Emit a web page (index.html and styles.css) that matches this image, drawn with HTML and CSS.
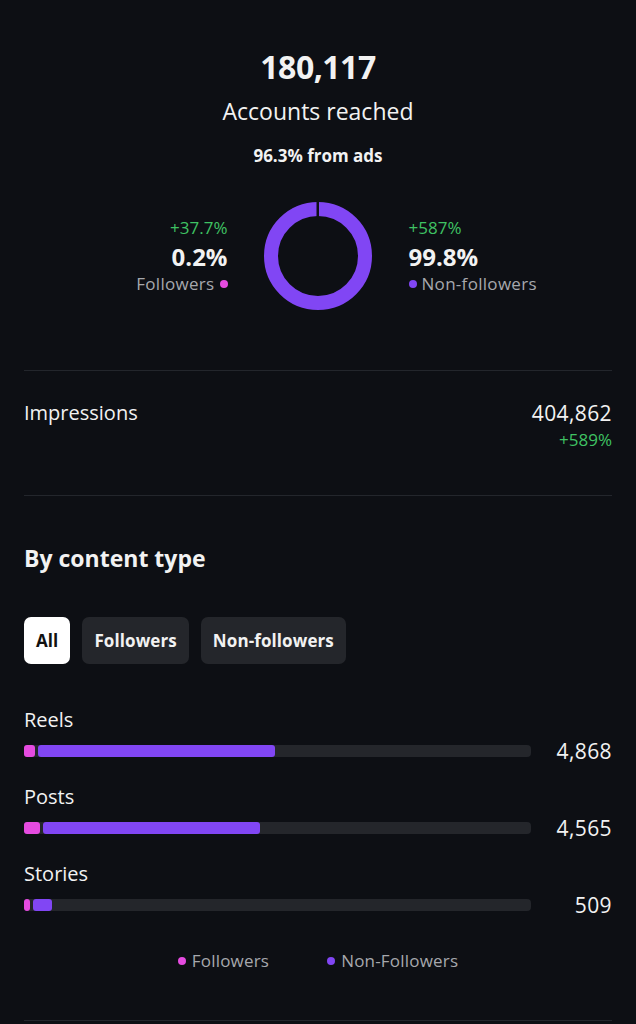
FILE: index.html
```html
<!DOCTYPE html>
<html>
<head>
<meta charset="utf-8">
<link rel="stylesheet" href="styles.css">
</head>
<body>
<main class="page">
  <section class="hero">
    <div class="big">180,117</div>
    <div class="sub">Accounts reached</div>
    <div class="ads">96.3% from ads</div>
    <div class="split">
      <div class="side left">
        <div class="chg">+37.7%</div>
        <div class="pct">0.2%</div>
        <div class="lbl">Followers <span class="dot pink"></span></div>
      </div>
      <svg class="donut" width="110" height="110" viewBox="0 0 110 110">
        <circle cx="55" cy="55" r="47" fill="none" stroke="#8146f4" stroke-width="14"/>
        <rect x="53.5" y="0" width="2.5" height="16" fill="#0d0f14"/>
      </svg>
      <div class="side right">
        <div class="chg">+587%</div>
        <div class="pct">99.8%</div>
        <div class="lbl"><span class="dot purple"></span> Non-followers</div>
      </div>
    </div>
  </section>

  <section class="imp">
    <div class="imp-l">Impressions</div>
    <div class="imp-r">
      <div class="imp-v">404,862</div>
      <div class="imp-c">+589%</div>
    </div>
  </section>

  <section class="ct">
    <h2 class="ct-title">By content type</h2>
    <div class="tabs">
      <span class="tab active">All</span>
      <span class="tab">Followers</span>
      <span class="tab">Non-followers</span>
    </div>
    <div class="rows">
      <div class="row">
        <div class="row-l">Reels</div>
        <div class="row-b">
          <div class="track">
            <span class="seg pink" style="width:11px"></span>
            <span class="seg purple" style="width:237px"></span>
          </div>
          <div class="val">4,868</div>
        </div>
      </div>
      <div class="row">
        <div class="row-l">Posts</div>
        <div class="row-b">
          <div class="track">
            <span class="seg pink" style="width:16px"></span>
            <span class="seg purple" style="width:217px"></span>
          </div>
          <div class="val">4,565</div>
        </div>
      </div>
      <div class="row">
        <div class="row-l">Stories</div>
        <div class="row-b">
          <div class="track">
            <span class="seg pink" style="width:6px"></span>
            <span class="seg purple" style="width:19px"></span>
          </div>
          <div class="val">509</div>
        </div>
      </div>
    </div>
    <div class="legend">
      <span class="li"><span class="dot pink"></span>Followers</span>
      <span class="li"><span class="dot purple"></span>Non-Followers</span>
    </div>
  </section>
</main>
</body>
</html>
```

FILE: styles.css
```css
html, body {
  margin: 0;
  padding: 0;
  background: #0d0f14;
}
body {
  font-family: "Open Sans", "Noto Sans", sans-serif;
  color: #f2f2f2;
  width: 636px;
  height: 1024px;
  overflow: hidden;
}
.page {
  padding: 0 24px;
}
.hero {
  display: flex;
  flex-direction: column;
  align-items: center;
  padding-top: 45px;
  padding-bottom: 59px;
  border-bottom: 1px solid #23262c;
}
.big {
  font-size: 32px;
  font-weight: 700;
  line-height: 44px;
  letter-spacing: -0.5px;
}
.sub {
  font-size: 23px;
  line-height: 30px;
  margin-top: 7px;
}
.ads {
  font-size: 17px;
  font-weight: 700;
  line-height: 22px;
  margin-top: 19px;
}
.split {
  display: flex;
  align-items: center;
  justify-content: center;
  margin-top: 34px;
  gap: 34px;
}
.side {
  display: flex;
  flex-direction: column;
  width: 170px;
}
.side.left { align-items: flex-end; margin-right: 1px; }
.side.right { align-items: flex-start; margin-left: 2px; }
.chg {
  color: #3fc263;
  font-size: 17px;
  line-height: 22px;
}
.pct {
  font-size: 24px;
  font-weight: 700;
  line-height: 30px;
  margin-top: 3px;
}
.lbl {
  color: #a6a8ad;
  font-size: 17px;
  line-height: 24px;
  letter-spacing: 0.3px;
  display: flex;
  align-items: center;
  gap: 5px;
}
.dot {
  display: inline-block;
  width: 8px;
  height: 8px;
  border-radius: 50%;
}
.dot.pink { background: #e54be0; }
.dot.purple { background: #8146f4; }
.donut { display: block; }

.imp {
  display: flex;
  justify-content: space-between;
  align-items: flex-start;
  padding-top: 28px;
  padding-bottom: 44px;
  border-bottom: 1px solid #23262c;
}
.imp-l {
  font-size: 20px;
  line-height: 28px;
}
.imp-r {
  display: flex;
  flex-direction: column;
  align-items: flex-end;
}
.imp-v {
  font-size: 21px;
  line-height: 28px;
  letter-spacing: 0.4px;
}
.imp-c {
  color: #3fc263;
  font-size: 17px;
  line-height: 22px;
  margin-top: 2px;
}

.ct {
  padding-top: 47px;
  border-bottom: 1px solid #23262c;
  padding-bottom: 47px;
}
.ct-title {
  margin: 0;
  font-size: 23px;
  font-weight: 700;
  line-height: 30px;
}
.tabs {
  display: flex;
  gap: 12px;
  margin-top: 44px;
}
.tab {
  display: flex;
  align-items: center;
  height: 47px;
  padding: 0 12px;
  border-radius: 7px;
  background: #24262b;
  font-size: 17px;
  font-weight: 700;
  letter-spacing: 0.1px;
  box-sizing: border-box;
}
.tab.active {
  background: #ffffff;
  color: #111;
  padding: 0 12px;
}
.rows {
  margin-top: 42px;
  display: flex;
  flex-direction: column;
  gap: 18px;
}
.row-l {
  font-size: 20px;
  line-height: 28px;
}
.row-b {
  display: flex;
  align-items: center;
  justify-content: space-between;
  margin-top: 3px;
  height: 28px;
}
.track {
  width: 507px;
  height: 12px;
  background: #24262b;
  border-radius: 4px;
  display: flex;
  gap: 3px;
}
.seg {
  display: block;
  height: 12px;
  border-radius: 3px;
}
.seg.pink { background: #e54be0; }
.seg.purple { background: #8146f4; }
.val {
  font-size: 21px;
  line-height: 28px;
  letter-spacing: 0.4px;
}
.legend {
  display: flex;
  justify-content: center;
  gap: 58px;
  margin-top: 30px;
  color: #a6a8ad;
  font-size: 17px;
  line-height: 24px;
  letter-spacing: 0.2px;
}
.li {
  display: flex;
  align-items: center;
  gap: 6px;
}
```
